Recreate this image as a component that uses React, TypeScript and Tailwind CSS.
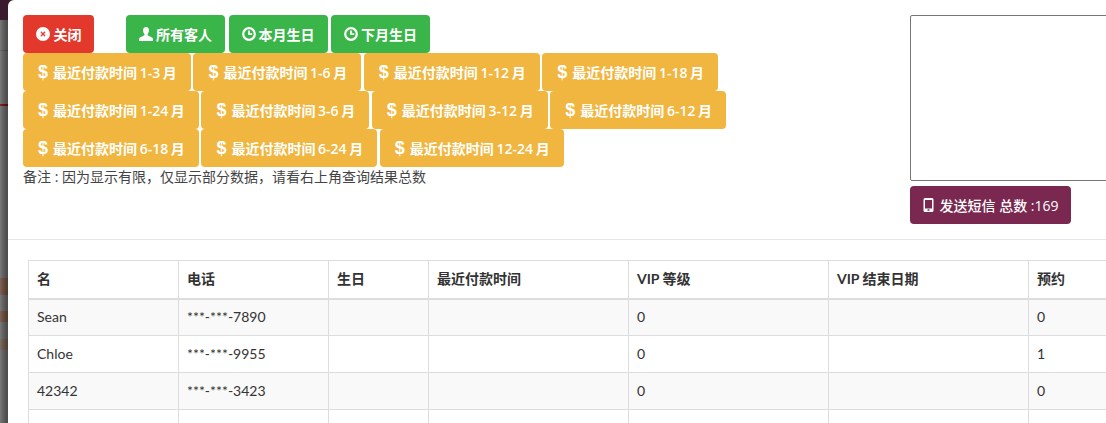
import { FaCircleXmark } from 'react-icons/fa6';

const payRows = [
  ['1-3', '1-6', '1-12', '1-18'],
  ['1-24', '3-6', '3-12', '6-12'],
  ['6-18', '6-24', '12-24'],
];

const rows = [
  { name: 'Sean', phone: '***-***-7890', vip: '0', appt: '0' },
  { name: 'Chloe', phone: '***-***-9955', vip: '0', appt: '1' },
  { name: '42342', phone: '***-***-3423', vip: '0', appt: '0' },
];

const FONT = "font-['Open_Sans','Noto_Sans_CJK_SC',sans-serif]";

function UserIcon() {
  return (
    <svg viewBox="0 0 14 14" className="h-[14px] w-[14px]" fill="currentColor">
      <path d="M7 0C5 0 4 1.4 4 3.2c0 1.5.6 2.9 1.4 3.7v1.3L1 10.4C.3 10.8 0 11.3 0 12v2h14v-2c0-.7-.3-1.2-1-1.6L8.6 8.200V6.900C9.400 6.100 10 4.700 10 3.200 10 1.400 9 0 7 0z" />
    </svg>
  );
}

function ClockIcon() {
  return (
    <svg viewBox="0 0 14 14" className="h-[14px] w-[14px]" fill="none" stroke="currentColor">
      <circle cx="7" cy="7" r="5.8" strokeWidth="2.2" />
      <path d="M7 3.500V7.200H10.200" strokeWidth="1.700" />
    </svg>
  );
}

function PhoneIcon() {
  return (
    <svg viewBox="0 0 11 14" className="h-[14px] w-[11px]" fill="currentColor">
      <path fillRule="evenodd" d="M2 0h7a1.500 1.500 0 0 1 1.500 1.500v11A1.500 1.500 0 0 1 9 14H2a1.500 1.500 0 0 1-1.500-1.500v-11A1.500 1.500 0 0 1 2 0zm0 2v8.500h7V2H2zm2.500 9.300v1.500h2v-1.500h-2z" />
    </svg>
  );
}

function GreenButton({ icon, label }: { icon: React.ReactNode; label: string }) {
  return (
    <button className="flex h-[38px] w-[99px] items-center justify-center gap-[3px] rounded-[4px] bg-[#39b54a] text-[14px] font-semibold text-white">
      {icon}
      {label}
    </button>
  );
}

function PayButton({ range }: { range: string }) {
  return (
    <button className="flex h-[38px] items-center gap-[5px] rounded-[4px] bg-[#f0b63f] pr-[14px] pl-[15px] text-[14px] font-semibold whitespace-nowrap text-white [word-spacing:-1px]">
      <span className="font-['Liberation_Sans',sans-serif] text-[18px] leading-none font-bold">$</span>
      最近付款时间 {range} 月
    </button>
  );
}

export default function App() {
  return (
    <div className={`flex h-[423px] w-[1106px] overflow-hidden bg-[#3b1a2e] text-[14px] text-[#333] ${FONT}`}>
      {/* page behind the modal */}
      <div className="relative mt-[20px] flex h-[403px] w-[8px] shrink-0 flex-col bg-[#6a6a6a]">
        <div className="h-[31px] border-b border-[#555]" />
        <div className="h-[55px] border-b-2 border-[#7a0d0d]" />
        <div className="mt-[172px] h-[17px] bg-[#7a3a1a]/50" />
        <div className="mt-[16px] h-[11px] bg-[#7a3a1a]/50" />
        <div className="mt-[17px] h-[11px] bg-[#7a4a2a]/40" />
        <div className="absolute inset-0 bg-gradient-to-r from-white/10 to-black/30" />
      </div>

      <div className="h-full w-[1098px] shrink-0 overflow-hidden rounded-tl-[6px] bg-white">
        {/* Top */}
        <div className="flex h-[240px] border-b border-[#e5e5e5] pl-[15px] pt-[15px]">
          <div className="w-[887px] shrink-0">
            <div className="flex">
              <button className="mr-[32px] flex h-[38px] w-[71px] items-center justify-center gap-[4px] rounded-[4px] bg-[#e3392c] text-[14px] font-semibold text-white">
                <FaCircleXmark className="h-[14px] w-[14px]" />
                关闭
              </button>
              <div className="flex gap-[3.5px]">
                <GreenButton icon={<UserIcon />} label="所有客人" />
                <GreenButton icon={<ClockIcon />} label="本月生日" />
                <GreenButton icon={<ClockIcon />} label="下月生日" />
              </div>
            </div>
            {payRows.map((row) => (
              <div key={row[0]} className="flex gap-[2.6px]">
                {row.map((range) => (
                  <PayButton key={range} range={range} />
                ))}
              </div>
            ))}
            <p className="leading-[20px] text-[#444]">备注 : 因为显示有限，仅显示部分数据，请看右上角查询结果总数</p>
          </div>
          <div className="w-[196px] shrink-0">
            <textarea className="block h-[166px] w-[260px] rounded-[2px] border border-[#767676] bg-white" />
            <button className="mt-[5px] flex h-[38px] w-[161px] items-center justify-center gap-[6px] rounded-[4px] bg-[#7a2850] text-[14px] font-medium text-white">
              <PhoneIcon />
              发送短信 总数 :169
            </button>
          </div>
        </div>

        {/* Table */}
        <div className="pl-[20px] pt-[20px]">
          <table className="w-[1100px] table-fixed border-collapse font-['Lato','Noto_Sans_CJK_SC',sans-serif]">
            <thead>
              <tr className="h-[38px] text-left">
                <th className="w-[150px] border border-b-2 border-[#ddd] px-[8px] pb-[2px]">名</th>
                <th className="w-[150px] border border-b-2 border-[#ddd] px-[8px] pb-[2px]">电话</th>
                <th className="w-[100px] border border-b-2 border-[#ddd] px-[8px] pb-[2px]">生日</th>
                <th className="w-[200px] border border-b-2 border-[#ddd] px-[8px] pb-[2px]">最近付款时间</th>
                <th className="w-[200px] border border-b-2 border-[#ddd] px-[8px] pb-[2px]">VIP 等级</th>
                <th className="w-[200px] border border-b-2 border-[#ddd] px-[8px] pb-[2px]">VIP 结束日期</th>
                <th className="w-[100px] border border-b-2 border-[#ddd] px-[8px] pb-[2px]">预约</th>
              </tr>
            </thead>
            <tbody>
              {rows.map((r, i) => (
                <tr key={r.name} className={`h-[37px] ${i % 2 === 0 ? 'bg-[#f9f9f9]' : 'bg-white'}`}>
                  <td className="border border-[#ddd] px-[8px] pb-[2px]">{r.name}</td>
                  <td className="border border-[#ddd] px-[8px] pb-[2px]">{r.phone}</td>
                  <td className="border border-[#ddd] px-[8px]" />
                  <td className="border border-[#ddd] px-[8px]" />
                  <td className="border border-[#ddd] px-[8px] pb-[2px]">{r.vip}</td>
                  <td className="border border-[#ddd] px-[8px]" />
                  <td className="border border-[#ddd] px-[8px] pb-[2px]">{r.appt}</td>
                </tr>
              ))}
              <tr className="h-[37px] bg-white">
                {[0, 1, 2, 3, 4, 5, 6].map((c) => (
                  <td key={c} className="border border-[#ddd] px-[8px]" />
                ))}
              </tr>
            </tbody>
          </table>
        </div>
      </div>
    </div>
  );
}
